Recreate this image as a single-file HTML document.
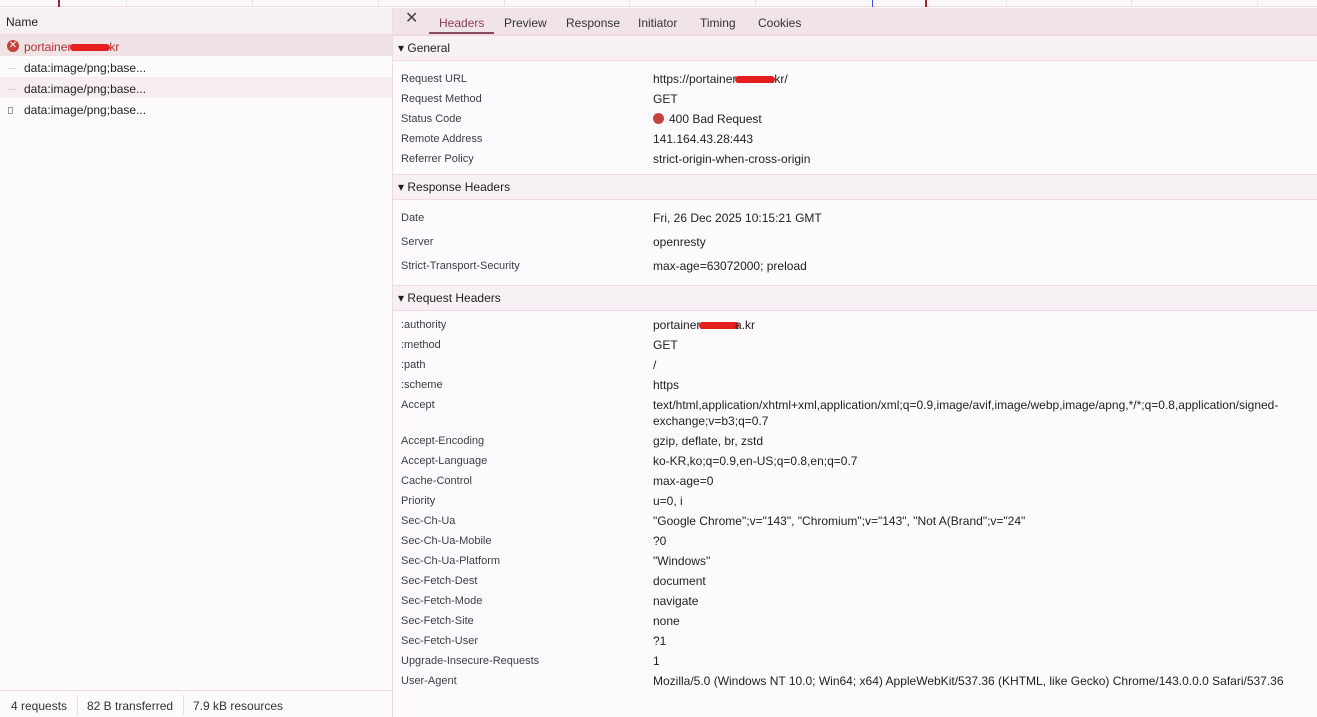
<!DOCTYPE html>
<html><head><meta charset="utf-8"><style>
*{margin:0;padding:0;box-sizing:border-box}
body{width:1317px;height:717px;overflow:hidden;background:#fdfbfe;font-family:"Liberation Sans","Noto Sans CJK KR",sans-serif;font-size:12px;color:#1f1f1f;position:relative}
.a{position:absolute;white-space:nowrap;line-height:16px;margin-top:1px}
.k{font-size:11px;color:#3c3c44;left:401px}
.v{left:653px}
.sec{position:absolute;left:393px;right:0;height:26px;background:#f7f1f5;border-top:1px solid #f3d9df;border-bottom:1px solid #f3d9df;font-size:12px;line-height:25px;padding-left:5px;color:#1f1f1f}
.red{display:inline-block;width:40px;height:7px;background:#e61e1e;border-radius:4px;vertical-align:middle;margin:0 -4px}
</style></head><body>
<div style="position:absolute;left:0;top:0;width:1317px;height:7px;background:#fbf8fb;border-bottom:1px solid #f3d9df"></div>
<div style="position:absolute;top:0;height:7px;left:126px;width:1px;background:#f1dfe4"></div>
<div style="position:absolute;top:0;height:7px;left:252px;width:1px;background:#f1dfe4"></div>
<div style="position:absolute;top:0;height:7px;left:378px;width:1px;background:#f1dfe4"></div>
<div style="position:absolute;top:0;height:7px;left:504px;width:1px;background:#f1dfe4"></div>
<div style="position:absolute;top:0;height:7px;left:629px;width:1px;background:#f1dfe4"></div>
<div style="position:absolute;top:0;height:7px;left:755px;width:1px;background:#f1dfe4"></div>
<div style="position:absolute;top:0;height:7px;left:1006px;width:1px;background:#f1dfe4"></div>
<div style="position:absolute;top:0;height:7px;left:1131px;width:1px;background:#f1dfe4"></div>
<div style="position:absolute;top:0;height:7px;left:1257px;width:1px;background:#f1dfe4"></div>
<div style="position:absolute;top:0;height:7px;left:58px;width:2px;background:#8a2b3a"></div>
<div style="position:absolute;top:0;height:7px;left:872px;width:1px;background:#3050e0"></div>
<div style="position:absolute;top:0;height:7px;left:925px;width:2px;background:#b02030"></div>
<div style="position:absolute;left:0;top:8px;width:392px;height:27px;background:#f6f0f4;border-bottom:1px solid #f3d9df"></div>
<div class="a" style="left:6px;top:13px">Name</div>
<div style="position:absolute;left:0;top:35px;width:392px;height:21px;background:#efe3e6"></div>
<div style="position:absolute;left:7px;top:40px;width:12px;height:12px;border-radius:50%;background:#c5433a;color:#fff;font-size:10px;line-height:12px;text-align:center">✕</div>
<div class="a" style="left:24px;top:38px;color:#b1302a">portainer.<span class="red"></span>.kr</div>
<div class="a" style="left:7px;top:59px;color:#bbb;font-size:9px">---</div>
<div class="a" style="left:24px;top:59px">data:image/png;base...</div>
<div style="position:absolute;left:0;top:77px;width:392px;height:21px;background:#f6eef1"></div>
<div class="a" style="left:7px;top:80px;color:#bbb;font-size:9px">---</div>
<div class="a" style="left:24px;top:80px">data:image/png;base...</div>
<div style="position:absolute;left:8px;top:107px;width:5px;height:7px;border:1px solid #999"></div>
<div class="a" style="left:24px;top:101px">data:image/png;base...</div>
<div style="position:absolute;left:392px;top:8px;width:1px;height:709px;background:#f3d9df"></div>
<div style="position:absolute;left:0;top:690px;width:392px;height:1px;background:#f3d9df"></div>
<div class="a" style="left:11px;top:697px;color:#333">4 requests</div>
<div style="position:absolute;left:77px;top:695px;width:1px;height:20px;background:#f3d9df"></div>
<div class="a" style="left:87px;top:697px;color:#333">82 B transferred</div>
<div style="position:absolute;left:183px;top:695px;width:1px;height:20px;background:#f3d9df"></div>
<div class="a" style="left:193px;top:697px;color:#333">7.9 kB resources</div>
<div style="position:absolute;left:393px;top:8px;right:0;height:27px;background:#f0e4ea;border-bottom:1px solid #f3d9df"></div>
<div class="a" style="left:405px;top:10px;font-size:16px;color:#444">✕</div>
<div class="a" style="left:439px;top:14px;color:#8a3e54">Headers</div>
<div style="position:absolute;left:429px;top:32px;width:65px;height:2px;background:#8a4a5e"></div>
<div class="a" style="left:504px;top:14px;color:#333">Preview</div>
<div class="a" style="left:566px;top:14px;color:#333">Response</div>
<div class="a" style="left:638px;top:14px;color:#333">Initiator</div>
<div class="a" style="left:700px;top:14px;color:#333">Timing</div>
<div class="a" style="left:758px;top:14px;color:#333">Cookies</div>
<div class="sec" style="top:35px">▾ General</div>
<div class="a k" style="top:70px">Request URL</div><div class="a v" style="top:70px">https://portainer.<span class="red"></span>.kr/</div>
<div class="a k" style="top:90px">Request Method</div><div class="a v" style="top:90px">GET</div>
<div class="a k" style="top:110px">Status Code</div><div class="a v" style="top:110px"><span style="display:inline-block;width:11px;height:11px;border-radius:50%;background:#c5433a;vertical-align:-1px;margin-right:5px"></span>400 Bad Request</div>
<div class="a k" style="top:130px">Remote Address</div><div class="a v" style="top:130px">141.164.43.28:443</div>
<div class="a k" style="top:150px">Referrer Policy</div><div class="a v" style="top:150px">strict-origin-when-cross-origin</div>
<div class="sec" style="top:174px">▾ Response Headers</div>
<div class="a k" style="top:209px">Date</div><div class="a v" style="top:209px">Fri, 26 Dec 2025 10:15:21 GMT</div>
<div class="a k" style="top:233px">Server</div><div class="a v" style="top:233px">openresty</div>
<div class="a k" style="top:257px">Strict-Transport-Security</div><div class="a v" style="top:257px">max-age=63072000; preload</div>
<div class="sec" style="top:285px">▾ Request Headers</div>
<div class="a k" style="top:316px">:authority</div><div class="a v" style="top:316px">portainer.<span class="red"></span>a.kr</div>
<div class="a k" style="top:336px">:method</div><div class="a v" style="top:336px">GET</div>
<div class="a k" style="top:356px">:path</div><div class="a v" style="top:356px">/</div>
<div class="a k" style="top:376px">:scheme</div><div class="a v" style="top:376px">https</div>
<div class="a k" style="top:396px">Accept</div><div class="a v" style="top:396px">text/html,application/xhtml+xml,application/xml;q=0.9,image/avif,image/webp,image/apng,*/*;q=0.8,application/signed-<br>exchange;v=b3;q=0.7</div>
<div class="a k" style="top:432px">Accept-Encoding</div><div class="a v" style="top:432px">gzip, deflate, br, zstd</div>
<div class="a k" style="top:452px">Accept-Language</div><div class="a v" style="top:452px">ko-KR,ko;q=0.9,en-US;q=0.8,en;q=0.7</div>
<div class="a k" style="top:472px">Cache-Control</div><div class="a v" style="top:472px">max-age=0</div>
<div class="a k" style="top:492px">Priority</div><div class="a v" style="top:492px">u=0, i</div>
<div class="a k" style="top:512px">Sec-Ch-Ua</div><div class="a v" style="top:512px">"Google Chrome";v="143", "Chromium";v="143", "Not A(Brand";v="24"</div>
<div class="a k" style="top:532px">Sec-Ch-Ua-Mobile</div><div class="a v" style="top:532px">?0</div>
<div class="a k" style="top:552px">Sec-Ch-Ua-Platform</div><div class="a v" style="top:552px">"Windows"</div>
<div class="a k" style="top:572px">Sec-Fetch-Dest</div><div class="a v" style="top:572px">document</div>
<div class="a k" style="top:592px">Sec-Fetch-Mode</div><div class="a v" style="top:592px">navigate</div>
<div class="a k" style="top:612px">Sec-Fetch-Site</div><div class="a v" style="top:612px">none</div>
<div class="a k" style="top:632px">Sec-Fetch-User</div><div class="a v" style="top:632px">?1</div>
<div class="a k" style="top:652px">Upgrade-Insecure-Requests</div><div class="a v" style="top:652px">1</div>
<div class="a k" style="top:672px">User-Agent</div><div class="a v" style="top:672px">Mozilla/5.0 (Windows NT 10.0; Win64; x64) AppleWebKit/537.36 (KHTML, like Gecko) Chrome/143.0.0.0 Safari/537.36</div>
</body></html>
